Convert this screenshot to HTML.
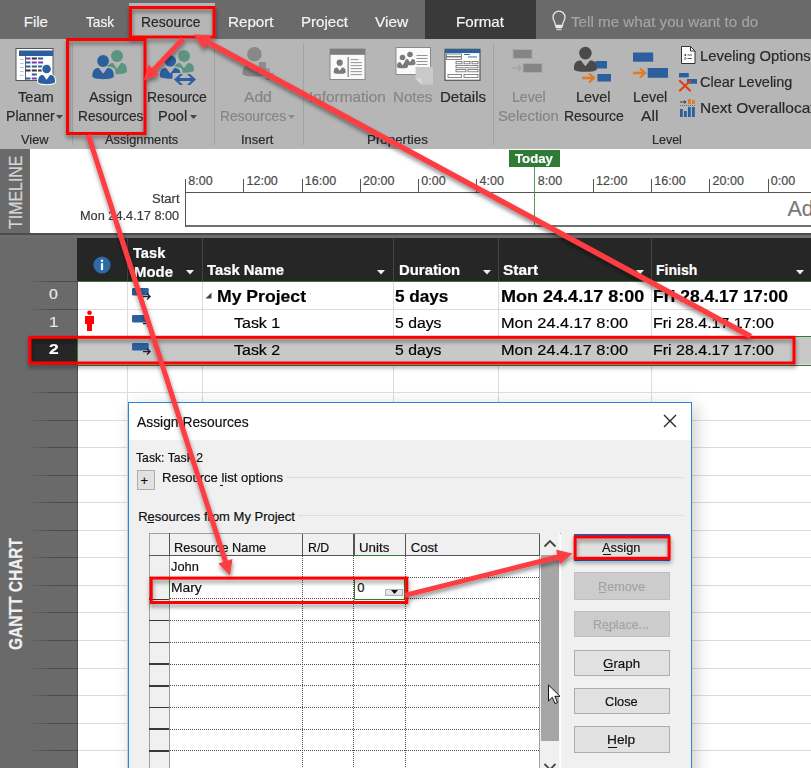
<!DOCTYPE html>
<html><head><meta charset="utf-8"><style>
html,body{margin:0;padding:0;}
body{width:811px;height:768px;overflow:hidden;position:relative;background:#fff;font-family:"Liberation Sans",sans-serif;}
.t{position:absolute;white-space:pre;transform-origin:0 0;-webkit-text-stroke:0.2px currentColor;font-family:"Liberation Sans",sans-serif;}
svg{overflow:visible}
</style></head><body>
<div style="position:absolute;left:0px;top:0px;width:811px;height:39px;background:#6a6a6a;"></div><div style="position:absolute;left:129px;top:3px;width:86px;height:36px;background:#b6b6b6;"></div><div style="position:absolute;left:425px;top:0px;width:111px;height:39px;background:#3a3a3a;"></div><svg style="position:absolute;left:550px;top:10px" width="18" height="22" viewBox="0 0 18 22">
<path d="M5.5 15.5 C5.5 12 3 10.5 3 7.2 A6 6 0 0 1 15 7.2 C15 10.5 12.5 12 12.5 15.5 Z" fill="none" stroke="#e8e8e8" stroke-width="1.3"/>
<rect x="5.5" y="15.8" width="7" height="2.2" fill="#e8e8e8"/><rect x="6.5" y="18.6" width="5" height="1.6" fill="#cfcfcf"/></svg><div style="position:absolute;left:0px;top:39px;width:811px;height:110px;background:#b6b6b6;"></div><div style="position:absolute;left:71.5px;top:44px;width:1px;height:101px;background:#a2a2a2;"></div><div style="position:absolute;left:213.8px;top:44px;width:1px;height:101px;background:#a2a2a2;"></div><div style="position:absolute;left:302.5px;top:44px;width:1px;height:101px;background:#a2a2a2;"></div><div style="position:absolute;left:492.5px;top:44px;width:1px;height:101px;background:#a2a2a2;"></div><svg style="position:absolute;left:55.5px;top:114.5px" width="7" height="4"><path d="M0 0H7L3.5 4Z" fill="#444"/></svg><svg style="position:absolute;left:190.0px;top:114.5px" width="7" height="4"><path d="M0 0H7L3.5 4Z" fill="#444"/></svg><svg style="position:absolute;left:287.5px;top:114.5px" width="7" height="4"><path d="M0 0H7L3.5 4Z" fill="#8a8a8a"/></svg><svg style="position:absolute;left:0;top:0" width="811" height="160"><rect x="16" y="48.5" width="37" height="32" fill="#fff" stroke="#555" stroke-width="1"/><rect x="19" y="50.5" width="34" height="5.5" fill="#2c5f9e"/><rect x="25" y="56" width="1" height="24" fill="#666"/><rect x="25.5" y="57.5" width="5" height="2" fill="#7a3aa8"/><rect x="31.8" y="57.5" width="5" height="2" fill="#333"/><rect x="38.1" y="57.5" width="5" height="2" fill="#2c5f9e"/><rect x="25.5" y="61.5" width="5" height="2" fill="#2c5f9e"/><rect x="31.8" y="61.5" width="5" height="2" fill="#7a3aa8"/><rect x="38.1" y="61.5" width="5" height="2" fill="#7a3aa8"/><rect x="25.5" y="65.5" width="5" height="2" fill="#2c5f9e"/><rect x="31.8" y="65.5" width="5" height="2" fill="#2c5f9e"/><rect x="38.1" y="65.5" width="5" height="2" fill="#2c5f9e"/><rect x="25.5" y="69.5" width="5" height="2" fill="#333"/><rect x="31.8" y="69.5" width="5" height="2" fill="#333"/><rect x="38.1" y="69.5" width="5" height="2" fill="#333"/><rect x="31.8" y="73.5" width="5" height="2" fill="#2c5f9e"/><rect x="25.5" y="77.5" width="5" height="2" fill="#2c5f9e"/><rect x="31.8" y="77.5" width="5" height="2" fill="#7a3aa8"/><g stroke="#fff" stroke-width="2" fill="#fff"><circle cx="46.6" cy="69" r="4.3" /><path d="M38.1 81.84 C38.1 76.9 39.800000000000004 75 43.2 75 L46.6 79.75 L50.0 75 C53.400000000000006 75 55.1 76.9 55.1 81.84 C55.1 84.975 38.1 84.975 38.1 81.84 Z" /></g><circle cx="46.6" cy="69" r="4.3" fill="#2c5f9e"/><path d="M38.1 81.84 C38.1 76.9 39.800000000000004 75 43.2 75 L46.6 79.75 L50.0 75 C53.400000000000006 75 55.1 76.9 55.1 81.84 C55.1 84.975 38.1 84.975 38.1 81.84 Z" fill="#2c5f9e"/><rect x="20" y="59" width="3.5" height="0.8" fill="#9db8de"/><rect x="20" y="63" width="3.5" height="0.8" fill="#9db8de"/><rect x="20" y="67" width="3.5" height="0.8" fill="#9db8de"/><rect x="20" y="71" width="3.5" height="0.8" fill="#9db8de"/><rect x="20" y="75" width="3.5" height="0.8" fill="#9db8de"/><circle cx="117" cy="56" r="6" fill="#5b9580"/><path d="M107.0 71.28 C107.0 65.3 109.0 63 113.0 63 L117 68.75 L121.0 63 C125.0 63 127.0 65.3 127.0 71.28 C127.0 75.075 107.0 75.075 107.0 71.28 Z" fill="#5b9580"/><circle cx="103.1" cy="61" r="6.6" fill="#b6b6b6"/><path d="M91.5 80 L91.5 72 C91.5 69 93 67.5 97 67 L103 67 L110 67 C114 67.5 115.5 69 115.5 72 L115.5 80 Z" fill="#b6b6b6"/><circle cx="103.1" cy="61" r="5.9" fill="#2c5f9e"/><path d="M92.35 76.28 C92.35 70.3 94.5 68 98.8 68 L103.1 73.75 L107.39999999999999 68 C111.69999999999999 68 113.85 70.3 113.85 76.28 C113.85 80.075 92.35 80.075 92.35 76.28 Z" fill="#2c5f9e"/><circle cx="184" cy="56" r="6" fill="#5b9580"/><path d="M174.0 70.2 C174.0 65.0 176.0 63 180.0 63 L184 68.0 L188.0 63 C192.0 63 194.0 65.0 194.0 70.2 C194.0 73.5 174.0 73.5 174.0 70.2 Z" fill="#5b9580"/><circle cx="170.3" cy="61" r="6.6" fill="#b6b6b6"/><path d="M158.5 80 L158.5 72 C158.5 69 160 67.5 164 67 L177 67 C181 67.5 182.5 69 182.5 72 L182.5 80 Z" fill="#b6b6b6"/><circle cx="170.3" cy="61" r="5.8" fill="#2c5f9e"/><path d="M159.8 75.92 C159.8 70.2 161.9 68 166.10000000000002 68 L170.3 73.5 L174.5 68 C178.70000000000002 68 180.8 70.2 180.8 75.92 C180.8 79.55 159.8 79.55 159.8 75.92 Z" fill="#2c5f9e"/><path d="M172.5 73 L196.5 73 L196.5 86 L172.5 86Z" fill="#b6b6b6"/><path d="M174 79.5 L180 74 L183 74 L179 78 L191 78 L187 74 L190 74 L196 79.5 L190 85 L187 85 L191 81 L179 81 L183 85 L180 85 Z" fill="#2c5f9e"/><circle cx="254.4" cy="54.2" r="7.3" fill="#888"/><path d="M242.4 73.64 C242.4 67.4 244.8 65 249.6 65 L254.4 71.0 L259.2 65 C264.0 65 266.4 67.4 266.4 73.64 C266.4 77.6 242.4 77.6 242.4 73.64 Z" fill="#888"/><rect x="259" y="62" width="7" height="12" fill="#8d8d8d"/><rect x="266" y="68" width="4" height="12" fill="#999"/><rect x="270" y="73" width="4" height="5" fill="#999"/><rect x="330" y="49" width="35" height="30.5" fill="#fafafa" stroke="#8a8a8a" stroke-width="1"/><rect x="330" y="49" width="35" height="5.8" fill="#7d7d7d"/><circle cx="339.7" cy="62.7" r="3.1" fill="#7a7a7a"/><path d="M333.7 72.18 C333.7 68.8 334.9 67.5 337.3 67.5 L339.7 70.75 L342.09999999999997 67.5 C344.5 67.5 345.7 68.8 345.7 72.18 C345.7 74.325 333.7 74.325 333.7 72.18 Z" fill="#7a7a7a"/><rect x="347.5" y="57" width="1.4" height="20" fill="#8a8a8a"/><rect x="350.5" y="59.2" width="8" height="0.9" fill="#8a8a8a"/><rect x="350.5" y="62.2" width="11.5" height="0.9" fill="#8a8a8a"/><rect x="350.5" y="65.2" width="11.5" height="0.9" fill="#8a8a8a"/><rect x="350.5" y="68.2" width="11.5" height="0.9" fill="#8a8a8a"/><rect x="350.5" y="71.2" width="11.5" height="0.9" fill="#8a8a8a"/><rect x="350.5" y="74.2" width="11.5" height="0.9" fill="#8a8a8a"/><rect x="396" y="47.5" width="34.5" height="27" fill="#fafafa" stroke="#8a8a8a" stroke-width="1"/><circle cx="402.5" cy="57.5" r="2.8" fill="#7a7a7a"/><path d="M397.0 66.68 C397.0 63.3 398.1 62 400.3 62 L402.5 65.25 L404.7 62 C406.9 62 408.0 63.3 408.0 66.68 C408.0 68.825 397.0 68.825 397.0 66.68 Z" fill="#7a7a7a"/><circle cx="410" cy="54.5" r="2.8" fill="#7a7a7a"/><path d="M404.5 63.68 C404.5 60.3 405.6 59 407.8 59 L410 62.25 L412.2 59 C414.4 59 415.5 60.3 415.5 63.68 C415.5 65.825 404.5 65.825 404.5 63.68 Z" fill="#7a7a7a"/><rect x="416.5" y="55" width="11" height="0.9" fill="#8a8a8a"/><rect x="416.5" y="58" width="11" height="0.9" fill="#8a8a8a"/><rect x="416.5" y="61" width="11" height="0.9" fill="#8a8a8a"/><rect x="416.5" y="64" width="11" height="0.9" fill="#8a8a8a"/><path d="M415.5 67 H433 V84.5 H421.5 L415.5 78.5 Z" fill="#c9c9c9"/><path d="M415.5 78.5 L421.5 78.5 L421.5 84.5 Z" fill="#dadada"/><rect x="445" y="49.3" width="35" height="31" fill="#fff" stroke="#555" stroke-width="1.2"/><rect x="445" y="49.3" width="35" height="3.8" fill="#2c5f9e"/><g fill="none" stroke="#6a6a6a" stroke-width="0.8"><rect x="446.5" y="54" width="15" height="2.5"/><rect x="446.5" y="57" width="15" height="2.5"/><rect x="456" y="61.5" width="6" height="2.3"/><rect x="464" y="61.5" width="6" height="2.3"/><rect x="472" y="61.5" width="6" height="2.3"/><rect x="456" y="65.5" width="22" height="2.3"/><rect x="456" y="69.5" width="10" height="2.3"/><rect x="468" y="69.5" width="10" height="2.3"/><rect x="448" y="74.5" width="13.5" height="3"/><rect x="464" y="74.5" width="14" height="3"/></g><rect x="464" y="54" width="6" height="0.9" fill="#2c5f9e"/><rect x="468" y="56.5" width="9" height="0.9" fill="#2c5f9e"/><rect x="513" y="49.5" width="19" height="9" fill="#858585" stroke="#a8a8a8" stroke-width="1"/><rect x="523" y="63.5" width="19" height="9" fill="#858585" stroke="#a8a8a8" stroke-width="1"/><path d="M512 68 H521 M518 65 L521 68 L518 71" fill="none" stroke="#a0a0a0" stroke-width="1.2"/><rect x="595.3" y="61" width="11.7" height="7.5" fill="#2c5f9e"/><circle cx="585.4" cy="53.1" r="6.3" fill="#4a4a4a"/><path d="M573.9 68.924 C573.9 62.84 576.1999999999999 60.5 580.8 60.5 L585.4 66.35 L590.0 60.5 C594.6 60.5 596.9 62.84 596.9 68.924 C596.9 72.785 573.9 72.785 573.9 68.924 Z" fill="#4a4a4a"/><rect x="597.4" y="74" width="13.6" height="7.5" fill="#2c5f9e"/><path d="M582 78 H594 M589 73.5 L594 78 L589 82.5" fill="none" stroke="#e07b24" stroke-width="2.3"/><rect x="633" y="52.5" width="20.2" height="9.2" fill="#2c5f9e"/><rect x="647.7" y="68" width="20.3" height="9.8" fill="#2c5f9e"/><path d="M633 73 H645 M640 68.5 L645 73 L640 77.5" fill="none" stroke="#e07b24" stroke-width="2.3"/><path d="M681.5 46.5 H690.5 L695 51 V63.5 H681.5 Z" fill="#fff" stroke="#333" stroke-width="1"/><path d="M690.5 46.5 V51 H695" fill="none" stroke="#333" stroke-width="1"/><circle cx="685.3" cy="55" r="0.9" fill="#333"/><circle cx="685.3" cy="58.5" r="0.9" fill="none" stroke="#333" stroke-width="0.6"/><rect x="687.5" y="54.6" width="4.5" height="0.8" fill="#333"/><rect x="687.5" y="58.1" width="4.5" height="0.8" fill="#333"/><rect x="679" y="73" width="9.8" height="4.4" fill="#2c5f9e"/><rect x="687" y="79" width="10" height="4.7" fill="#2c5f9e"/><path d="M680 81 L690 90.5 M690 81 L680 90.5" stroke="#d9421c" stroke-width="2.2" stroke-linecap="round"/><rect x="680" y="109" width="2.8" height="8" fill="#2c5f9e"/><rect x="684" y="111" width="2.8" height="6" fill="#2c5f9e"/><rect x="688" y="107" width="2.8" height="10" fill="#2c5f9e"/><rect x="692" y="107" width="2.8" height="10" fill="#2c5f9e"/><rect x="688" y="99" width="2.8" height="5" fill="#e07b24"/><rect x="692" y="100" width="2.8" height="4" fill="#e07b24"/><path d="M680 102 H686 M684 100.5 L686 102 L684 103.5" fill="none" stroke="#333" stroke-width="0.9"/><path d="M680 105.5 H695" stroke="#555" stroke-width="0.8" stroke-dasharray="1 1"/></svg><div style="position:absolute;left:0px;top:149px;width:811px;height:84px;background:#ffffff;"></div><div style="position:absolute;left:0px;top:149px;width:30px;height:84px;background:#6a6a6a;"></div><div style="position:absolute;left:185px;top:192px;width:626px;height:1.2px;background:#555;"></div><div style="position:absolute;left:185px;top:225.2px;width:626px;height:1.7px;background:#707070;"></div><div style="position:absolute;left:184.7px;top:178.5px;width:1.2px;height:48px;background:#555;"></div><div style="position:absolute;left:243px;top:178.5px;width:1.1px;height:14px;background:#555;"></div><div style="position:absolute;left:302px;top:178.5px;width:1.1px;height:14px;background:#555;"></div><div style="position:absolute;left:360px;top:178.5px;width:1.1px;height:14px;background:#555;"></div><div style="position:absolute;left:418px;top:178.5px;width:1.1px;height:14px;background:#555;"></div><div style="position:absolute;left:476px;top:178.5px;width:1.1px;height:14px;background:#555;"></div><div style="position:absolute;left:593px;top:178.5px;width:1.1px;height:14px;background:#555;"></div><div style="position:absolute;left:651px;top:178.5px;width:1.1px;height:14px;background:#555;"></div><div style="position:absolute;left:709px;top:178.5px;width:1.1px;height:14px;background:#555;"></div><div style="position:absolute;left:768px;top:178.5px;width:1.1px;height:14px;background:#555;"></div><div style="position:absolute;left:534.3px;top:167px;width:1.1px;height:60px;background:#4f9a4f;"></div><div style="position:absolute;left:509px;top:150px;width:51px;height:17px;background:#2f7a34;"></div><div style="position:absolute;left:0px;top:233px;width:811px;height:5px;background:#6e6e6e;"></div><div style="position:absolute;left:0px;top:233px;width:811px;height:1.6px;background:#4c4c4c;"></div><div style="position:absolute;left:0px;top:238px;width:811px;height:43px;background:#262626;"></div><div style="position:absolute;left:0px;top:238px;width:77px;height:43px;background:#6a6a6a;"></div><div style="position:absolute;left:77px;top:280.5px;width:734px;height:1.5px;background:#2e7d32;"></div><div style="position:absolute;left:77px;top:282px;width:734px;height:486px;background:#fff;"></div><div style="position:absolute;left:0px;top:281px;width:77px;height:487px;background:#6a6a6a;"></div><div style="position:absolute;left:0;top:281px;width:77px;height:1px;background:linear-gradient(90deg,rgba(70,70,70,0) 0%,rgba(70,70,70,0) 35%,rgba(70,70,70,0.9) 70%)"></div><div style="position:absolute;left:77px;top:309px;width:734px;height:1px;background:#dcdcdc;"></div><div style="position:absolute;left:0;top:309px;width:77px;height:1px;background:linear-gradient(90deg,rgba(70,70,70,0) 0%,rgba(70,70,70,0) 35%,rgba(70,70,70,0.9) 70%)"></div><div style="position:absolute;left:77px;top:337px;width:734px;height:1px;background:#dcdcdc;"></div><div style="position:absolute;left:0;top:337px;width:77px;height:1px;background:linear-gradient(90deg,rgba(70,70,70,0) 0%,rgba(70,70,70,0) 35%,rgba(70,70,70,0.9) 70%)"></div><div style="position:absolute;left:77px;top:364px;width:734px;height:1px;background:#dcdcdc;"></div><div style="position:absolute;left:0;top:364px;width:77px;height:1px;background:linear-gradient(90deg,rgba(70,70,70,0) 0%,rgba(70,70,70,0) 35%,rgba(70,70,70,0.9) 70%)"></div><div style="position:absolute;left:77px;top:392px;width:734px;height:1px;background:#dcdcdc;"></div><div style="position:absolute;left:0;top:392px;width:77px;height:1px;background:linear-gradient(90deg,rgba(70,70,70,0) 0%,rgba(70,70,70,0) 35%,rgba(70,70,70,0.9) 70%)"></div><div style="position:absolute;left:77px;top:420px;width:734px;height:1px;background:#dcdcdc;"></div><div style="position:absolute;left:0;top:420px;width:77px;height:1px;background:linear-gradient(90deg,rgba(70,70,70,0) 0%,rgba(70,70,70,0) 35%,rgba(70,70,70,0.9) 70%)"></div><div style="position:absolute;left:77px;top:447px;width:734px;height:1px;background:#dcdcdc;"></div><div style="position:absolute;left:0;top:447px;width:77px;height:1px;background:linear-gradient(90deg,rgba(70,70,70,0) 0%,rgba(70,70,70,0) 35%,rgba(70,70,70,0.9) 70%)"></div><div style="position:absolute;left:77px;top:475px;width:734px;height:1px;background:#dcdcdc;"></div><div style="position:absolute;left:0;top:475px;width:77px;height:1px;background:linear-gradient(90deg,rgba(70,70,70,0) 0%,rgba(70,70,70,0) 35%,rgba(70,70,70,0.9) 70%)"></div><div style="position:absolute;left:77px;top:502px;width:734px;height:1px;background:#dcdcdc;"></div><div style="position:absolute;left:0;top:502px;width:77px;height:1px;background:linear-gradient(90deg,rgba(70,70,70,0) 0%,rgba(70,70,70,0) 35%,rgba(70,70,70,0.9) 70%)"></div><div style="position:absolute;left:77px;top:530px;width:734px;height:1px;background:#dcdcdc;"></div><div style="position:absolute;left:0;top:530px;width:77px;height:1px;background:linear-gradient(90deg,rgba(70,70,70,0) 0%,rgba(70,70,70,0) 35%,rgba(70,70,70,0.9) 70%)"></div><div style="position:absolute;left:77px;top:557px;width:734px;height:1px;background:#dcdcdc;"></div><div style="position:absolute;left:0;top:557px;width:77px;height:1px;background:linear-gradient(90deg,rgba(70,70,70,0) 0%,rgba(70,70,70,0) 35%,rgba(70,70,70,0.9) 70%)"></div><div style="position:absolute;left:77px;top:585px;width:734px;height:1px;background:#dcdcdc;"></div><div style="position:absolute;left:0;top:585px;width:77px;height:1px;background:linear-gradient(90deg,rgba(70,70,70,0) 0%,rgba(70,70,70,0) 35%,rgba(70,70,70,0.9) 70%)"></div><div style="position:absolute;left:77px;top:612px;width:734px;height:1px;background:#dcdcdc;"></div><div style="position:absolute;left:0;top:612px;width:77px;height:1px;background:linear-gradient(90deg,rgba(70,70,70,0) 0%,rgba(70,70,70,0) 35%,rgba(70,70,70,0.9) 70%)"></div><div style="position:absolute;left:77px;top:640px;width:734px;height:1px;background:#dcdcdc;"></div><div style="position:absolute;left:0;top:640px;width:77px;height:1px;background:linear-gradient(90deg,rgba(70,70,70,0) 0%,rgba(70,70,70,0) 35%,rgba(70,70,70,0.9) 70%)"></div><div style="position:absolute;left:77px;top:668px;width:734px;height:1px;background:#dcdcdc;"></div><div style="position:absolute;left:0;top:668px;width:77px;height:1px;background:linear-gradient(90deg,rgba(70,70,70,0) 0%,rgba(70,70,70,0) 35%,rgba(70,70,70,0.9) 70%)"></div><div style="position:absolute;left:77px;top:695px;width:734px;height:1px;background:#dcdcdc;"></div><div style="position:absolute;left:0;top:695px;width:77px;height:1px;background:linear-gradient(90deg,rgba(70,70,70,0) 0%,rgba(70,70,70,0) 35%,rgba(70,70,70,0.9) 70%)"></div><div style="position:absolute;left:77px;top:723px;width:734px;height:1px;background:#dcdcdc;"></div><div style="position:absolute;left:0;top:723px;width:77px;height:1px;background:linear-gradient(90deg,rgba(70,70,70,0) 0%,rgba(70,70,70,0) 35%,rgba(70,70,70,0.9) 70%)"></div><div style="position:absolute;left:77px;top:750px;width:734px;height:1px;background:#dcdcdc;"></div><div style="position:absolute;left:0;top:750px;width:77px;height:1px;background:linear-gradient(90deg,rgba(70,70,70,0) 0%,rgba(70,70,70,0) 35%,rgba(70,70,70,0.9) 70%)"></div><div style="position:absolute;left:127.3px;top:238px;width:1px;height:43px;background:#444;"></div><div style="position:absolute;left:127.3px;top:282px;width:1px;height:486px;background:#dcdcdc;"></div><div style="position:absolute;left:201.5px;top:238px;width:1px;height:43px;background:#444;"></div><div style="position:absolute;left:201.5px;top:282px;width:1px;height:486px;background:#dcdcdc;"></div><div style="position:absolute;left:392.8px;top:238px;width:1px;height:43px;background:#444;"></div><div style="position:absolute;left:392.8px;top:282px;width:1px;height:486px;background:#dcdcdc;"></div><div style="position:absolute;left:498.3px;top:238px;width:1px;height:43px;background:#444;"></div><div style="position:absolute;left:498.3px;top:282px;width:1px;height:486px;background:#dcdcdc;"></div><div style="position:absolute;left:651.2px;top:238px;width:1px;height:43px;background:#444;"></div><div style="position:absolute;left:651.2px;top:282px;width:1px;height:486px;background:#dcdcdc;"></div><div style="position:absolute;left:76.5px;top:282px;width:1px;height:486px;background:#505050;"></div><div style="position:absolute;left:77px;top:337px;width:734px;height:27px;background:#c8c8c8;"></div><div style="position:absolute;left:29px;top:337px;width:48px;height:27px;background:#262626;"></div><div style="position:absolute;left:77px;top:336px;width:734px;height:1px;background:#2e7d32;"></div><div style="position:absolute;left:77px;top:364.5px;width:734px;height:1px;background:#2e7d32;"></div><div style="position:absolute;left:77px;top:337px;width:1.2px;height:27px;background:#2e7d32;"></div><svg style="position:absolute;left:186.3px;top:270.25px" width="8" height="4.5"><path d="M0 0H8L4.0 4.5Z" fill="#eee"/></svg><svg style="position:absolute;left:377.3px;top:270.25px" width="8" height="4.5"><path d="M0 0H8L4.0 4.5Z" fill="#eee"/></svg><svg style="position:absolute;left:483.1px;top:270.25px" width="8" height="4.5"><path d="M0 0H8L4.0 4.5Z" fill="#eee"/></svg><svg style="position:absolute;left:635.6px;top:270.25px" width="8" height="4.5"><path d="M0 0H8L4.0 4.5Z" fill="#eee"/></svg><svg style="position:absolute;left:795.6px;top:270.25px" width="8" height="4.5"><path d="M0 0H8L4.0 4.5Z" fill="#eee"/></svg><svg style="position:absolute;left:93px;top:256px" width="18" height="18"><circle cx="9" cy="9" r="8.6" fill="#2e6aa6"/><rect x="7.9" y="7.2" width="2.2" height="6.8" fill="#fff"/><circle cx="9" cy="4.8" r="1.25" fill="#fff"/></svg><svg style="position:absolute;left:131px;top:287.6px" width="22" height="14"><rect x="1" y="0" width="16.7" height="7.4" rx="1.2" fill="#2c5f9e"/><path d="M12 8.6 H19 M16 5.6 L19 8.6 L16 11.6" fill="none" stroke="#222" stroke-width="1.4"/></svg><svg style="position:absolute;left:131px;top:315.2px" width="22" height="14"><rect x="1" y="0" width="16.7" height="7.4" rx="1.2" fill="#2c5f9e"/><path d="M12 8.6 H19 M16 5.6 L19 8.6 L16 11.6" fill="none" stroke="#222" stroke-width="1.4"/></svg><svg style="position:absolute;left:131px;top:343px" width="22" height="14"><rect x="1" y="0" width="16.7" height="7.4" rx="1.2" fill="#2c5f9e"/><path d="M12 8.6 H19 M16 5.6 L19 8.6 L16 11.6" fill="none" stroke="#222" stroke-width="1.4"/></svg><svg style="position:absolute;left:84px;top:310px" width="11" height="22"><circle cx="5.5" cy="2.7" r="2.3" fill="#f00"/><path d="M1 6 H10 V14 H8 V21 H3 V14 H1 Z" fill="#f00"/></svg><svg style="position:absolute;left:205px;top:292px" width="7" height="7"><path d="M6.5 0.5 V6.5 H0.5 Z" fill="#444"/></svg><div style="position:absolute;left:127.5px;top:401.5px;width:564px;height:380px;box-shadow:4px 4px 16px rgba(0,0,0,0.2)"></div><div style="position:absolute;left:127.5px;top:401.5px;width:564px;height:370px;background:#f0f0f0;box-sizing:border-box;border:1px solid #2a86d8;"></div><div style="position:absolute;left:128.5px;top:402.5px;width:562px;height:37px;background:#fff;"></div><svg style="position:absolute;left:663px;top:414px" width="14" height="14"><path d="M1 1 L13 13 M13 1 L1 13" stroke="#222" stroke-width="1.3"/></svg><div style="position:absolute;left:137px;top:470px;width:17.5px;height:20px;background:#e1e1e1;box-sizing:border-box;border:1px solid #adadad;"></div><div style="position:absolute;left:287px;top:477px;width:396px;height:1px;background:#dcdcdc;"></div><div style="position:absolute;left:298px;top:515px;width:385px;height:1px;background:#dcdcdc;"></div><div style="position:absolute;left:148.5px;top:533.3px;width:412px;height:240px;background:#fff;box-sizing:border-box;border-top:1px solid #a0a0a0;border-left:1px solid #a0a0a0;"></div><div style="position:absolute;left:149.5px;top:534.3px;width:390px;height:21.5px;background:#f0f0f0;"></div><div style="position:absolute;left:149.5px;top:534.3px;width:20px;height:240px;background:#f0f0f0;"></div><div style="position:absolute;left:168.5px;top:533.3px;width:1.2px;height:22px;background:#555;"></div><div style="position:absolute;left:168.5px;top:555.3px;width:1.2px;height:220px;background:#9a9a9a;"></div><div style="position:absolute;left:148.5px;top:555px;width:391px;height:1.2px;background:#555;"></div><div style="position:absolute;left:302.3px;top:534.3px;width:1.2px;height:21.5px;background:#555;"></div><div style="position:absolute;left:353.4px;top:534.3px;width:1.2px;height:21.5px;background:#555;"></div><div style="position:absolute;left:405.2px;top:534.3px;width:1.2px;height:21.5px;background:#555;"></div><div style="position:absolute;left:538.5px;top:534.3px;width:1.2px;height:22px;background:#555;"></div><div style="position:absolute;left:538.5px;top:556.3px;width:1.2px;height:220px;background:#a0a0a0;"></div><div style="position:absolute;left:148.5px;top:576.5px;width:20.5px;height:1.6px;background:#3a3a3a;"></div><div style="position:absolute;left:169.5px;top:577px;width:369px;height:1px;background:repeating-linear-gradient(90deg,#4a4a4a 0 1px,transparent 1px 2px);"></div><div style="position:absolute;left:148.5px;top:598.1999999999999px;width:20.5px;height:1.6px;background:#3a3a3a;"></div><div style="position:absolute;left:169.5px;top:598px;width:369px;height:1px;background:repeating-linear-gradient(90deg,#4a4a4a 0 1px,transparent 1px 2px);"></div><div style="position:absolute;left:148.5px;top:619.9px;width:20.5px;height:1.6px;background:#3a3a3a;"></div><div style="position:absolute;left:169.5px;top:620px;width:369px;height:1px;background:repeating-linear-gradient(90deg,#4a4a4a 0 1px,transparent 1px 2px);"></div><div style="position:absolute;left:148.5px;top:641.5999999999999px;width:20.5px;height:1.6px;background:#3a3a3a;"></div><div style="position:absolute;left:169.5px;top:642px;width:369px;height:1px;background:repeating-linear-gradient(90deg,#4a4a4a 0 1px,transparent 1px 2px);"></div><div style="position:absolute;left:148.5px;top:663.3px;width:20.5px;height:1.6px;background:#3a3a3a;"></div><div style="position:absolute;left:169.5px;top:664px;width:369px;height:1px;background:repeating-linear-gradient(90deg,#4a4a4a 0 1px,transparent 1px 2px);"></div><div style="position:absolute;left:148.5px;top:685.0px;width:20.5px;height:1.6px;background:#3a3a3a;"></div><div style="position:absolute;left:169.5px;top:685px;width:369px;height:1px;background:repeating-linear-gradient(90deg,#4a4a4a 0 1px,transparent 1px 2px);"></div><div style="position:absolute;left:148.5px;top:706.6999999999999px;width:20.5px;height:1.6px;background:#3a3a3a;"></div><div style="position:absolute;left:169.5px;top:707px;width:369px;height:1px;background:repeating-linear-gradient(90deg,#4a4a4a 0 1px,transparent 1px 2px);"></div><div style="position:absolute;left:148.5px;top:728.4px;width:20.5px;height:1.6px;background:#3a3a3a;"></div><div style="position:absolute;left:169.5px;top:729px;width:369px;height:1px;background:repeating-linear-gradient(90deg,#4a4a4a 0 1px,transparent 1px 2px);"></div><div style="position:absolute;left:148.5px;top:750.0999999999999px;width:20.5px;height:1.6px;background:#3a3a3a;"></div><div style="position:absolute;left:169.5px;top:750px;width:369px;height:1px;background:repeating-linear-gradient(90deg,#4a4a4a 0 1px,transparent 1px 2px);"></div><div style="position:absolute;left:148.5px;top:771.8px;width:20.5px;height:1.6px;background:#3a3a3a;"></div><div style="position:absolute;left:169.5px;top:772px;width:369px;height:1px;background:repeating-linear-gradient(90deg,#4a4a4a 0 1px,transparent 1px 2px);"></div><div style="position:absolute;left:148.5px;top:793.5px;width:20.5px;height:1.6px;background:#3a3a3a;"></div><div style="position:absolute;left:169.5px;top:794px;width:369px;height:1px;background:repeating-linear-gradient(90deg,#4a4a4a 0 1px,transparent 1px 2px);"></div><div style="position:absolute;left:302px;top:556px;width:1px;height:220px;background:repeating-linear-gradient(180deg,#4a4a4a 0 1px,transparent 1px 2px);"></div><div style="position:absolute;left:353px;top:556px;width:1px;height:220px;background:repeating-linear-gradient(180deg,#4a4a4a 0 1px,transparent 1px 2px);"></div><div style="position:absolute;left:405px;top:556px;width:1px;height:220px;background:repeating-linear-gradient(180deg,#4a4a4a 0 1px,transparent 1px 2px);"></div><div style="position:absolute;left:353.4px;top:554.5px;width:52px;height:1.3px;background:#2e7d32;"></div><div style="position:absolute;left:353.5px;top:577.7px;width:51.7px;height:22px;background:#fff;box-sizing:border-box;border:1.3px solid #2e7d32;"></div><div style="position:absolute;left:385.4px;top:588.5px;width:17.6px;height:7.5px;background:#e6e6e6;box-sizing:border-box;border:1px solid #b0b0b0;"></div><svg style="position:absolute;left:390.7px;top:590.3px" width="7" height="4"><path d="M0 0H7L3.5 4Z" fill="#111"/></svg><div style="position:absolute;left:149.5px;top:577.5px;width:19px;height:21.5px;background:#f0f0f0;"></div><div style="position:absolute;left:168.5px;top:577.7px;width:1.3px;height:21.5px;background:#2e7d32;"></div><div style="position:absolute;left:539.5px;top:533.3px;width:20.5px;height:240px;background:#f0f0f0;"></div><div style="position:absolute;left:541px;top:555px;width:18px;height:186px;background:#a6a6a6;"></div><svg style="position:absolute;left:543px;top:539px" width="14" height="9"><path d="M1.5 7.5 L7 2 L12.5 7.5" fill="none" stroke="#444" stroke-width="1.8"/></svg><svg style="position:absolute;left:543px;top:762px" width="14" height="9"><path d="M1.5 2 L7 7.5 L12.5 2" fill="none" stroke="#444" stroke-width="1.8"/></svg><div style="position:absolute;left:559px;top:533.3px;width:1px;height:240px;background:#fafafa;"></div><div style="position:absolute;left:574px;top:533.8px;width:96px;height:26.800000000000068px;background:#e1e1e1;box-sizing:border-box;border:2px solid #1e5fc2;"></div><div style="position:absolute;left:574px;top:572px;width:96px;height:27.5px;background:#cccccc;box-sizing:border-box;border:1px solid #bfbfbf;"></div><div style="position:absolute;left:574px;top:610.8px;width:96px;height:26.200000000000045px;background:#cccccc;box-sizing:border-box;border:1px solid #bfbfbf;"></div><div style="position:absolute;left:574px;top:649.6px;width:96px;height:26.600000000000023px;background:#e1e1e1;box-sizing:border-box;border:1px solid #adadad;"></div><div style="position:absolute;left:574px;top:687.6px;width:96px;height:26.899999999999977px;background:#e1e1e1;box-sizing:border-box;border:1px solid #adadad;"></div><div style="position:absolute;left:574px;top:726.1px;width:96px;height:26.600000000000023px;background:#e1e1e1;box-sizing:border-box;border:1px solid #adadad;"></div><div style="position:absolute;left:219.5px;top:484.5px;width:3.8000000000000114px;height:1px;background:#111;"></div><div style="position:absolute;left:146.6px;top:522px;width:7.0px;height:1px;background:#111;"></div><div style="position:absolute;left:603px;top:553.6px;width:8px;height:1px;background:#111;"></div><div style="position:absolute;left:598.5px;top:592.2px;width:7.7000000000000455px;height:1px;background:#a3a3a3;"></div><div style="position:absolute;left:605.3px;top:630.3px;width:6.300000000000068px;height:1px;background:#a3a3a3;"></div><div style="position:absolute;left:604.2px;top:669.8px;width:9.599999999999909px;height:1px;background:#111;"></div><div style="position:absolute;left:608.3px;top:746.7px;width:9.200000000000045px;height:1px;background:#111;"></div><div class="t" style="left:23.8px;top:13.8px;font-size:15px;line-height:15px;font-weight:400;color:#f4f4f4;">File</div><div class="t" style="left:86.3px;top:13.8px;font-size:15px;line-height:15px;font-weight:400;color:#f4f4f4;transform:scaleX(0.9110);">Task</div><div class="t" style="left:228.4px;top:13.8px;font-size:15px;line-height:15px;font-weight:400;color:#f4f4f4;transform:scaleX(1.0126);">Report</div><div class="t" style="left:300.9px;top:13.8px;font-size:15px;line-height:15px;font-weight:400;color:#f4f4f4;transform:scaleX(1.0046);">Project</div><div class="t" style="left:374.7px;top:13.8px;font-size:15px;line-height:15px;font-weight:400;color:#f4f4f4;transform:scaleX(1.0295);">View</div><div class="t" style="left:455.9px;top:13.8px;font-size:15px;line-height:15px;font-weight:400;color:#f4f4f4;transform:scaleX(1.0081);">Format</div><div class="t" style="left:141.2px;top:13.8px;font-size:15px;line-height:15px;font-weight:400;color:#262626;transform:scaleX(0.9267);">Resource</div><div class="t" style="left:571.0px;top:13.8px;font-size:15px;line-height:15px;font-weight:400;color:#a4a4a4;transform:scaleX(1.0118);">Tell me what you want to do</div><div class="t" style="left:17.5px;top:89.9px;font-size:14.5px;line-height:14.5px;font-weight:400;color:#2a2a2a;transform:scaleX(1.0093);">Team</div><div class="t" style="left:5.5px;top:108.7px;font-size:14.5px;line-height:14.5px;font-weight:400;color:#2a2a2a;transform:scaleX(0.9743);">Planner</div><div class="t" style="left:88.7px;top:89.9px;font-size:14.5px;line-height:14.5px;font-weight:400;color:#2a2a2a;transform:scaleX(0.9924);">Assign</div><div class="t" style="left:77.6px;top:108.7px;font-size:14.5px;line-height:14.5px;font-weight:400;color:#2a2a2a;transform:scaleX(0.9436);">Resources</div><div class="t" style="left:147.4px;top:89.9px;font-size:14.5px;line-height:14.5px;font-weight:400;color:#2a2a2a;transform:scaleX(0.9652);">Resource</div><div class="t" style="left:157.9px;top:108.7px;font-size:14.5px;line-height:14.5px;font-weight:400;color:#2a2a2a;transform:scaleX(1.0058);">Pool</div><div class="t" style="left:243.8px;top:89.9px;font-size:14.5px;line-height:14.5px;font-weight:400;color:#858585;transform:scaleX(1.0770);">Add</div><div class="t" style="left:219.7px;top:108.7px;font-size:14.5px;line-height:14.5px;font-weight:400;color:#858585;transform:scaleX(0.9551);">Resources</div><div class="t" style="left:308.9px;top:89.7px;font-size:14.5px;line-height:14.5px;font-weight:400;color:#858585;transform:scaleX(1.0572);">Information</div><div class="t" style="left:393.2px;top:89.7px;font-size:14.5px;line-height:14.5px;font-weight:400;color:#858585;transform:scaleX(1.0398);">Notes</div><div class="t" style="left:439.6px;top:89.7px;font-size:14.5px;line-height:14.5px;font-weight:400;color:#2a2a2a;transform:scaleX(1.0377);">Details</div><div class="t" style="left:512.4px;top:89.7px;font-size:14.5px;line-height:14.5px;font-weight:400;color:#858585;transform:scaleX(0.9720);">Level</div><div class="t" style="left:498.4px;top:108.7px;font-size:14.5px;line-height:14.5px;font-weight:400;color:#858585;transform:scaleX(1.0192);">Selection</div><div class="t" style="left:575.8px;top:89.7px;font-size:14.5px;line-height:14.5px;font-weight:400;color:#2a2a2a;transform:scaleX(0.9922);">Level</div><div class="t" style="left:563.5px;top:108.7px;font-size:14.5px;line-height:14.5px;font-weight:400;color:#2a2a2a;transform:scaleX(0.9635);">Resource</div><div class="t" style="left:633.3px;top:89.7px;font-size:14.5px;line-height:14.5px;font-weight:400;color:#2a2a2a;transform:scaleX(0.9893);">Level</div><div class="t" style="left:640.7px;top:108.7px;font-size:14.5px;line-height:14.5px;font-weight:400;color:#2a2a2a;transform:scaleX(1.0791);">All</div><div class="t" style="left:700.0px;top:48.7px;font-size:14.5px;line-height:14.5px;font-weight:400;color:#2a2a2a;transform:scaleX(1.0239);">Leveling Options</div><div class="t" style="left:700.0px;top:75.2px;font-size:14.5px;line-height:14.5px;font-weight:400;color:#2a2a2a;transform:scaleX(0.9967);">Clear Leveling</div><div class="t" style="left:700.0px;top:101.2px;font-size:14.5px;line-height:14.5px;font-weight:400;color:#2a2a2a;transform:scaleX(1.0692);">Next Overallocation</div><div class="t" style="left:21.2px;top:132.8px;font-size:13px;line-height:13px;font-weight:400;color:#2a2a2a;transform:scaleX(0.9838);">View</div><div class="t" style="left:105.4px;top:132.8px;font-size:13px;line-height:13px;font-weight:400;color:#2a2a2a;transform:scaleX(0.9836);">Assignments</div><div class="t" style="left:241.3px;top:132.8px;font-size:13px;line-height:13px;font-weight:400;color:#2a2a2a;transform:scaleX(0.9964);">Insert</div><div class="t" style="left:366.8px;top:132.8px;font-size:13px;line-height:13px;font-weight:400;color:#2a2a2a;transform:scaleX(1.0262);">Properties</div><div class="t" style="left:651.8px;top:132.8px;font-size:13px;line-height:13px;font-weight:400;color:#2a2a2a;transform:scaleX(0.9621);">Level</div><div class="t" style="left:7.5px;top:228.5px;font-size:17.5px;line-height:17.5px;font-weight:400;color:#d4d4d4;transform:rotate(-90deg) scaleX(0.9106);">TIMELINE</div><div class="t" style="left:151.5px;top:191.6px;font-size:13px;line-height:13px;font-weight:400;color:#3a3a3a;transform:scaleX(1.0048);">Start</div><div class="t" style="left:79.9px;top:209.0px;font-size:13px;line-height:13px;font-weight:400;color:#3a3a3a;transform:scaleX(0.9802);">Mon 24.4.17 8:00</div><div class="t" style="left:188.3px;top:174.6px;font-size:12.5px;line-height:12.5px;font-weight:400;color:#4a4a4a;">8:00</div><div class="t" style="left:246.5px;top:174.6px;font-size:12.5px;line-height:12.5px;font-weight:400;color:#4a4a4a;">12:00</div><div class="t" style="left:304.8px;top:174.6px;font-size:12.5px;line-height:12.5px;font-weight:400;color:#4a4a4a;">16:00</div><div class="t" style="left:363.1px;top:174.6px;font-size:12.5px;line-height:12.5px;font-weight:400;color:#4a4a4a;">20:00</div><div class="t" style="left:421.3px;top:174.6px;font-size:12.5px;line-height:12.5px;font-weight:400;color:#4a4a4a;">0:00</div><div class="t" style="left:479.6px;top:174.6px;font-size:12.5px;line-height:12.5px;font-weight:400;color:#4a4a4a;">4:00</div><div class="t" style="left:537.8px;top:174.6px;font-size:12.5px;line-height:12.5px;font-weight:400;color:#4a4a4a;">8:00</div><div class="t" style="left:596.1px;top:174.6px;font-size:12.5px;line-height:12.5px;font-weight:400;color:#4a4a4a;">12:00</div><div class="t" style="left:654.3px;top:174.6px;font-size:12.5px;line-height:12.5px;font-weight:400;color:#4a4a4a;">16:00</div><div class="t" style="left:712.6px;top:174.6px;font-size:12.5px;line-height:12.5px;font-weight:400;color:#4a4a4a;">20:00</div><div class="t" style="left:770.8px;top:174.6px;font-size:12.5px;line-height:12.5px;font-weight:400;color:#4a4a4a;">0:00</div><div class="t" style="left:514.8px;top:152.5px;font-size:12.5px;line-height:12.5px;font-weight:700;color:#fff;transform:scaleX(1.0560);">Today</div><div class="t" style="left:787.5px;top:198.8px;font-size:21.5px;line-height:21.5px;font-weight:400;color:#7a7a7a;">Ad</div><div class="t" style="left:132.9px;top:244.8px;font-size:15px;line-height:15px;font-weight:700;color:#fff;transform:scaleX(0.9765);">Task</div><div class="t" style="left:133.5px;top:263.8px;font-size:15px;line-height:15px;font-weight:700;color:#fff;transform:scaleX(0.9956);">Mode</div><div class="t" style="left:207.0px;top:262.6px;font-size:14px;line-height:14px;font-weight:700;color:#fff;transform:scaleX(1.0575);">Task Name</div><div class="t" style="left:398.6px;top:262.6px;font-size:14px;line-height:14px;font-weight:700;color:#fff;transform:scaleX(1.0632);">Duration</div><div class="t" style="left:502.9px;top:262.6px;font-size:14px;line-height:14px;font-weight:700;color:#fff;transform:scaleX(1.1032);">Start</div><div class="t" style="left:656.0px;top:262.6px;font-size:14px;line-height:14px;font-weight:700;color:#fff;">Finish</div><div class="t" style="left:49.3px;top:287.3px;font-size:14px;line-height:14px;font-weight:400;color:#e6e6e6;transform:scaleX(1.1415);">0</div><div class="t" style="left:49.3px;top:315.1px;font-size:14px;line-height:14px;font-weight:400;color:#e6e6e6;transform:scaleX(1.2184);">1</div><div class="t" style="left:48.6px;top:342.4px;font-size:14px;line-height:14px;font-weight:700;color:#fff;transform:scaleX(1.2441);">2</div><div class="t" style="left:217.3px;top:287.8px;font-size:17px;line-height:17px;font-weight:700;color:#000;transform:scaleX(1.0351);">My Project</div><div class="t" style="left:394.7px;top:287.8px;font-size:17px;line-height:17px;font-weight:700;color:#000;transform:scaleX(1.0087);">5 days</div><div class="t" style="left:500.9px;top:287.8px;font-size:17px;line-height:17px;font-weight:700;color:#000;transform:scaleX(1.0605);">Mon 24.4.17 8:00</div><div class="t" style="left:653.3px;top:287.8px;font-size:17px;line-height:17px;font-weight:700;color:#000;transform:scaleX(1.0276);">Fri 28.4.17 17:00</div><div class="t" style="left:233.6px;top:314.9px;font-size:15.5px;line-height:15.5px;font-weight:400;color:#000;transform:scaleX(1.0310);">Task 1</div><div class="t" style="left:394.7px;top:314.9px;font-size:15.5px;line-height:15.5px;font-weight:400;color:#000;transform:scaleX(1.0159);">5 days</div><div class="t" style="left:500.9px;top:314.9px;font-size:15.5px;line-height:15.5px;font-weight:400;color:#000;transform:scaleX(1.0534);">Mon 24.4.17 8:00</div><div class="t" style="left:653.3px;top:314.9px;font-size:15.5px;line-height:15.5px;font-weight:400;color:#000;transform:scaleX(1.0307);">Fri 28.4.17 17:00</div><div class="t" style="left:233.6px;top:342.2px;font-size:15.5px;line-height:15.5px;font-weight:400;color:#000;transform:scaleX(1.0310);">Task 2</div><div class="t" style="left:394.7px;top:342.2px;font-size:15.5px;line-height:15.5px;font-weight:400;color:#000;transform:scaleX(1.0159);">5 days</div><div class="t" style="left:500.9px;top:342.2px;font-size:15.5px;line-height:15.5px;font-weight:400;color:#000;transform:scaleX(1.0534);">Mon 24.4.17 8:00</div><div class="t" style="left:653.3px;top:342.2px;font-size:15.5px;line-height:15.5px;font-weight:400;color:#000;transform:scaleX(1.0307);">Fri 28.4.17 17:00</div><div class="t" style="left:7.5px;top:650px;font-size:17.5px;line-height:17.5px;font-weight:700;color:#f0f0f0;transform:rotate(-90deg) scaleX(0.8863);">GANTT CHART</div><div class="t" style="left:137.4px;top:413.7px;font-size:15px;line-height:15px;font-weight:400;color:#111;transform:scaleX(0.9231);">Assign Resources</div><div class="t" style="left:136.4px;top:450.6px;font-size:13px;line-height:13px;font-weight:400;color:#111;transform:scaleX(0.9397);">Task: Task 2</div><div class="t" style="left:140.5px;top:473.5px;font-size:13px;line-height:13px;font-weight:400;color:#111;">+</div><div class="t" style="left:161.5px;top:470.9px;font-size:13px;line-height:13px;font-weight:400;color:#111;transform:scaleX(1.0035);">Resource list options</div><div class="t" style="left:138.2px;top:509.8px;font-size:13px;line-height:13px;font-weight:400;color:#111;">Resources from My Project</div><div class="t" style="left:173.5px;top:540.5px;font-size:13px;line-height:13px;font-weight:400;color:#111;transform:scaleX(0.9804);">Resource Name</div><div class="t" style="left:308.4px;top:540.5px;font-size:13px;line-height:13px;font-weight:400;color:#111;transform:scaleX(0.9468);">R/D</div><div class="t" style="left:358.8px;top:540.5px;font-size:13px;line-height:13px;font-weight:400;color:#111;transform:scaleX(1.0228);">Units</div><div class="t" style="left:410.8px;top:540.5px;font-size:13px;line-height:13px;font-weight:400;color:#111;">Cost</div><div class="t" style="left:170.8px;top:559.6px;font-size:13px;line-height:13px;font-weight:400;color:#111;transform:scaleX(0.9857);">John</div><div class="t" style="left:170.8px;top:581.2px;font-size:13px;line-height:13px;font-weight:400;color:#111;transform:scaleX(1.0661);">Mary</div><div class="t" style="left:357.3px;top:581.2px;font-size:13px;line-height:13px;font-weight:400;color:#111;">0</div><div class="t" style="left:602.3px;top:541.1px;font-size:13.5px;line-height:13.5px;font-weight:400;color:#111;transform:scaleX(0.9474);">Assign</div><div class="t" style="left:597.5px;top:579.6px;font-size:13.5px;line-height:13.5px;font-weight:400;color:#a3a3a3;transform:scaleX(0.9387);">Remove</div><div class="t" style="left:593.2px;top:617.6px;font-size:13.5px;line-height:13.5px;font-weight:400;color:#a3a3a3;transform:scaleX(0.9211);">Replace...</div><div class="t" style="left:603.2px;top:656.6px;font-size:13.5px;line-height:13.5px;font-weight:400;color:#111;transform:scaleX(0.9885);">Graph</div><div class="t" style="left:605.4px;top:694.8px;font-size:13.5px;line-height:13.5px;font-weight:400;color:#111;transform:scaleX(0.9474);">Close</div><div class="t" style="left:607.3px;top:733.1px;font-size:13.5px;line-height:13.5px;font-weight:400;color:#111;transform:scaleX(1.0156);">Help</div><svg style="position:absolute;left:0;top:0" width="811" height="768"><defs><filter id="sh" x="-10%" y="-10%" width="120%" height="120%"><feDropShadow dx="0.5" dy="3" stdDeviation="2" flood-color="#000" flood-opacity="0.45"/></filter></defs><g filter="url(#sh)"><rect x="130.5" y="7.5" width="83.5" height="29.5" fill="none" stroke="#ff0000" stroke-width="3"/><rect x="67.5" y="39.5" width="77.5" height="94" fill="none" stroke="#ff0000" stroke-width="3"/><rect x="29.8" y="337.3" width="764.2" height="25.69999999999999" fill="none" stroke="#ff0000" stroke-width="3"/><rect x="151.2" y="578.1" width="255.60000000000002" height="24.399999999999977" fill="none" stroke="#ff0000" stroke-width="3"/><rect x="575.1" y="537.0" width="94.0" height="21.299999999999955" fill="none" stroke="#ff0000" stroke-width="3"/><path d="M181.2 36.9 L152.0 67.9 L148.4 64.5 L143.6 80.6 L159.3 74.8 L155.7 71.4 L184.8 40.3 Z" fill="#fc3d42"/><path d="M752.0 333.9 L209.0 39.7 L211.5 35.1 L193.6 34.5 L203.9 49.2 L206.4 44.5 L749.4 338.7 Z" fill="#fc3d42"/><path d="M85.8 135.6 L223.0 562.0 L218.3 563.5 L230.0 575.5 L232.5 558.9 L227.8 560.5 L90.6 134.0 Z" fill="#fc3d42"/><path d="M405.4 597.7 L558.6 559.5 L559.8 564.3 L572.5 553.4 L556.1 549.8 L557.3 554.6 L404.2 592.9 Z" fill="#fc3d42"/></g></svg><svg style="position:absolute;left:547px;top:684px" width="14" height="22"><path d="M1.5 1 L1.5 17 L5.3 13.3 L8 19.5 L10.5 18.5 L7.8 12.3 L13 12.3 Z" fill="#fff" stroke="#111" stroke-width="1"/></svg>
</body></html>
